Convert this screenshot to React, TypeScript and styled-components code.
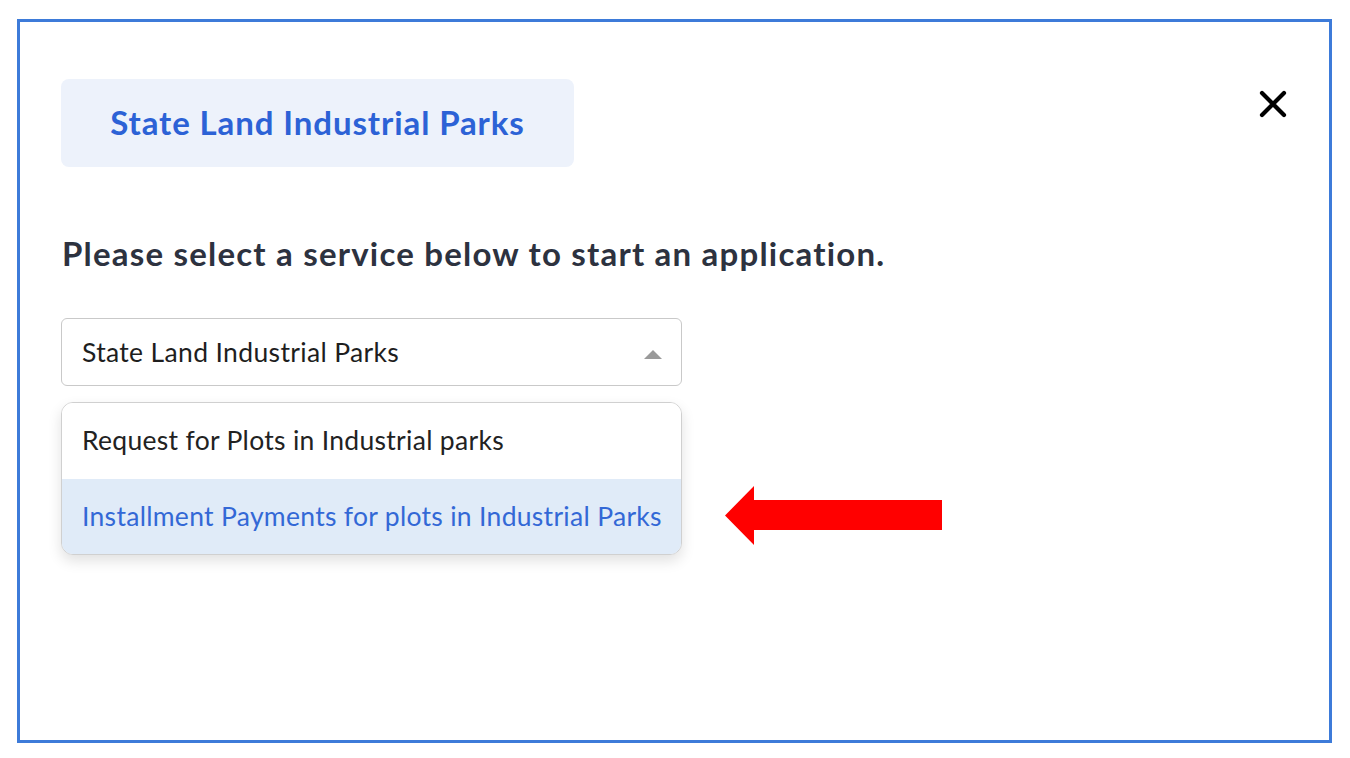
import React from "react";
import styled, { createGlobalStyle } from "styled-components";

const Global = createGlobalStyle`
  html, body { margin: 0; padding: 0; background: #ffffff; }
  body { font-family: "Lato", "Noto Sans", sans-serif; }
  * { box-sizing: border-box; }
`;

const Frame = styled.div`
  margin: 19px 0 0 17px;
  width: 1315px;
  height: 724px;
  border: 3px solid #3d7bd9;
  background: #fff;
  padding: 57px 42px 0 41px;
  display: flex;
  flex-direction: column;
`;

const Header = styled.div`
  display: flex;
  justify-content: space-between;
  align-items: flex-start;
`;

const TitleTag = styled.div`
  width: 513px;
  height: 88px;
  border-radius: 8px;
  background: #edf2fb;
  display: flex;
  align-items: center;
  justify-content: center;
  color: #2c62d6;
  font-weight: 700;
  font-size: 33px;
  letter-spacing: 0.9px;
  padding-bottom: 2px;
`;

const CloseButton = styled.button`
  margin-top: 11px;
  width: 28px;
  height: 28px;
  padding: 0;
  border: none;
  background: none;
  display: flex;
  align-items: center;
  justify-content: center;
  cursor: pointer;
`;

const Prompt = styled.h2`
  margin: 66px 0 0 1px;
  font-size: 33px;
  font-weight: 700;
  color: #2d323f;
  line-height: 40px;
  letter-spacing: 1.2px;
`;

const Select = styled.div`
  margin-top: 45px;
  width: 621px;
  height: 68px;
  border: 1px solid #c9c9c9;
  border-radius: 6px;
  display: flex;
  align-items: center;
  justify-content: space-between;
  padding: 0 19px 0 20px;
  font-size: 26.5px;
  letter-spacing: 0.35px;
  color: #1e1e1e;
`;

const Caret = styled.span`
  width: 0;
  height: 0;
  border-left: 9px solid transparent;
  border-right: 9px solid transparent;
  border-bottom: 9px solid #9a9a9a;
  margin-top: 4px;
`;

const MenuRow = styled.div`
  margin-top: 16px;
  display: flex;
  align-items: flex-start;
`;

const Menu = styled.div`
  width: 621px;
  border: 1px solid #d0d0d0;
  border-radius: 12px;
  overflow: hidden;
  box-shadow: 0 6px 14px rgba(0, 0, 0, 0.12);
  background: #fff;
`;

const Option = styled.div<{ $active?: boolean }>`
  height: ${(p) => (p.$active ? "75px" : "76px")};
  display: flex;
  align-items: center;
  padding: 0 10px 2px 20px;
  white-space: nowrap;
  font-size: 26.5px;
  letter-spacing: 0.3px;
  background: ${(p) => (p.$active ? "#e0ebf8" : "#fff")};
  color: ${(p) => (p.$active ? "#3368d6" : "#222")};
`;

const Pointer = styled.svg`
  margin: 84px 0 0 43px;
  flex: none;
`;

export default function App() {
  return (
    <>
      <Global />
      <Frame>
        <Header>
          <TitleTag>State Land Industrial Parks</TitleTag>
          <CloseButton aria-label="Close">
            <svg width="28" height="28" viewBox="0 0 28 28">
              <path d="M3 3 L25 25 M25 3 L3 25" stroke="#000" strokeWidth="4.2" strokeLinecap="round" />
            </svg>
          </CloseButton>
        </Header>
        <Prompt>Please select a service below to start an application.</Prompt>
        <Select>
          <span>State Land Industrial Parks</span>
          <Caret />
        </Select>
        <MenuRow>
          <Menu>
            <Option>Request for Plots in Industrial parks</Option>
            <Option $active>Installment Payments for plots in Industrial Parks</Option>
          </Menu>
          <Pointer width="218" height="59" viewBox="0 0 218 59">
            <polygon points="0,29.5 29,0 29,14 217,14 217,44 29,44 29,59" fill="#ff0000" />
          </Pointer>
        </MenuRow>
      </Frame>
    </>
  );
}
